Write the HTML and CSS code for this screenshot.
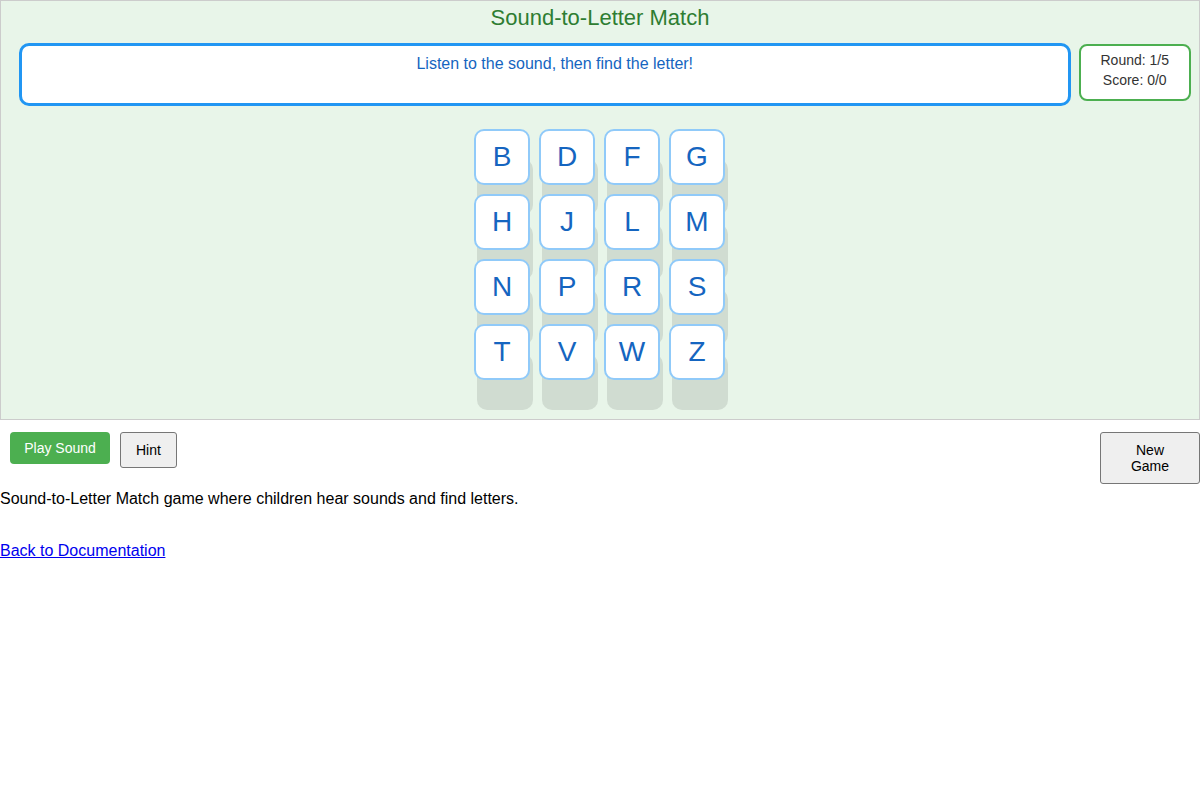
FILE: index.html
```html
<!DOCTYPE html>
<html lang="en">
  <head>
    <meta charset="UTF-8" />
    <meta name="viewport" content="width=device-width, initial-scale=1.0" />
    <title>Sound-to-Letter Match</title>
    <link rel="stylesheet" href="styles.css">
  </head>
  <body>
    <!-- Game area -->
    <div class="game">
      <h2 class="title">Sound-to-Letter Match</h2>

      <div class="topRow">
        <div class="prompt">Listen to the sound, then find the letter!</div>
        <div class="score">
          <div>Round: 1/5</div>
          <div>Score: 0/0</div>
        </div>
      </div>

      <div class="letters">
        <button class="tile">B</button>
        <button class="tile">D</button>
        <button class="tile">F</button>
        <button class="tile">G</button>
        <button class="tile">H</button>
        <button class="tile">J</button>
        <button class="tile">L</button>
        <button class="tile">M</button>
        <button class="tile">N</button>
        <button class="tile">P</button>
        <button class="tile">R</button>
        <button class="tile">S</button>
        <button class="tile">T</button>
        <button class="tile">V</button>
        <button class="tile">W</button>
        <button class="tile">Z</button>
      </div>
    </div>

    <!-- Controls -->
    <div class="controls">
      <button class="play">Play Sound</button>
      <button class="plain">Hint</button>
      <button class="plain newGame">New Game</button>
    </div>

    <p class="desc">Sound-to-Letter Match game where children hear sounds and find letters.</p>

    <p class="back"><a href="#">Back to Documentation</a></p>
  </body>
</html>
```

FILE: styles.css
```css
* {
  box-sizing: border-box;
}

html,
body {
  margin: 0;
  font-family: "Liberation Sans", Arial, sans-serif;
  color: #000;
  background: #fff;
}

.game {
  height: 420px;
  padding-top: 4px;
  border: 1px solid #ccc;
  background: #e8f5e9;
}

.title {
  margin: 0;
  font-size: 22px;
  font-weight: normal;
  color: #2e7d32;
  text-align: center;
}

.topRow {
  display: flex;
  align-items: flex-start;
  gap: 8px;
  margin: 12px 8px 0 18px;
}

.prompt {
  flex: 1;
  height: 63px;
  padding: 9px 8px 8px 28px;
  border: 3px solid #2196f3;
  border-radius: 10px;
  background: #fff;
  color: #1565c0;
  font-size: 16px;
  text-align: center;
}

.score {
  margin-top: 1px;
  padding: 4px 20px 9px;
  border: 2px solid #4caf50;
  border-radius: 8px;
  background: #fff;
  color: #333;
  font-size: 14px;
  line-height: 20px;
  text-align: center;
}

.letters {
  display: grid;
  grid-template-columns: repeat(4, 56px);
  grid-auto-rows: 56px;
  gap: 9px;
  justify-content: center;
  margin-top: 23px;
  padding-right: 1px;
}

.tile {
  display: flex;
  align-items: center;
  justify-content: center;
  width: 56px;
  height: 56px;
  padding: 0;
  border: 2px solid #90caf9;
  border-radius: 10px;
  background: #fff;
  color: #1565c0;
  font-family: inherit;
  font-size: 28px;
  box-shadow: 3px 30px 0 rgba(0, 0, 0, 0.1);
  cursor: pointer;
}

.controls {
  display: flex;
  align-items: flex-start;
  margin-top: 12px;
}

.controls button {
  font-family: inherit;
  font-size: 14px;
  line-height: 16px;
  cursor: pointer;
}

.play {
  margin-left: 10px;
  width: 100px;
  padding: 8px 0;
  border: none;
  border-radius: 4px;
  background: #4caf50;
  color: #fff;
}

.plain {
  margin-left: 10px;
  padding: 9px 15px;
  border: 1px solid #767676;
  border-radius: 3px;
  background: #efefef;
  color: #000;
}

.newGame {
  margin-left: auto;
  width: 100px;
}

.desc {
  margin: 6px 0 0;
  font-size: 16px;
}

.back {
  margin: 34px 0 0;
  font-size: 16px;
}

.back a {
  color: #0000ee;
}
```
